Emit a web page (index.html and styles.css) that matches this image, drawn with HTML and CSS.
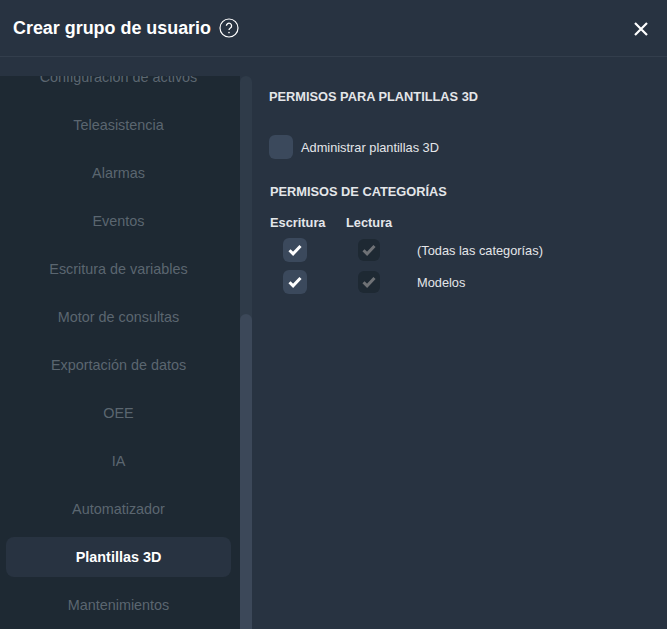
FILE: index.html
```html
<!DOCTYPE html>
<html lang="es">
<head>
<meta charset="utf-8">
<title>Crear grupo de usuario</title>
<link rel="stylesheet" href="styles.css">
</head>
<body>
<div class="dialog">
  <header class="head">
    <h1 class="title">Crear grupo de usuario</h1>
    <svg class="help" viewBox="0 0 20 20" width="20" height="20" aria-hidden="true"><circle cx="10" cy="10" r="9" fill="none" stroke="#fff" stroke-width="1.2"/><path d="M7.4 7.8a2.6 2.6 0 1 1 4 2.2c-.9.6-1.4 1-1.4 2.1" fill="none" stroke="#fff" stroke-width="1.3"/><circle cx="10" cy="14.6" r=".8" fill="#fff"/></svg>
    <svg class="close" viewBox="0 0 14 14" width="14" height="14" aria-hidden="true"><path d="M1 1l12 12M13 1L1 13" stroke="#fff" stroke-width="2.2" fill="none"/></svg>
  </header>
  <div class="body">
    <aside class="side">
      <nav class="list">
        <a class="item">Configuración de activos</a>
        <a class="item">Teleasistencia</a>
        <a class="item">Alarmas</a>
        <a class="item">Eventos</a>
        <a class="item">Escritura de variables</a>
        <a class="item">Motor de consultas</a>
        <a class="item">Exportación de datos</a>
        <a class="item">OEE</a>
        <a class="item">IA</a>
        <a class="item">Automatizador</a>
        <a class="item active">Plantillas 3D</a>
        <a class="item">Mantenimientos</a>
      </nav>
    </aside>
    <div class="track"><div class="thumb"></div></div>
    <main class="main">
      <h2 class="h-perm">PERMISOS PARA PLANTILLAS 3D</h2>
      <label class="admin"><span class="box big"></span><span class="admin-label">Administrar plantillas 3D</span></label>
      <h2 class="h-cat">PERMISOS DE CATEGORÍAS</h2>
      <div class="grid">
        <span class="col-h">Escritura</span><span class="col-h">Lectura</span><span></span>
        <span class="cell"><span class="box on"><svg viewBox="0 0 14 12" width="14" height="12"><path d="M1.5 6.2l3.6 3.6L12.5 2" fill="none" stroke="#fff" stroke-width="3"/></svg></span></span>
        <span class="cell"><span class="box off"><svg viewBox="0 0 14 12" width="14" height="12"><path d="M1.5 6.2l3.6 3.6L12.5 2" fill="none" stroke="#6f7276" stroke-width="3"/></svg></span></span>
        <span class="row-label">(Todas las categorías)</span>
        <span class="cell"><span class="box on"><svg viewBox="0 0 14 12" width="14" height="12"><path d="M1.5 6.2l3.6 3.6L12.5 2" fill="none" stroke="#fff" stroke-width="3"/></svg></span></span>
        <span class="cell"><span class="box off"><svg viewBox="0 0 14 12" width="14" height="12"><path d="M1.5 6.2l3.6 3.6L12.5 2" fill="none" stroke="#6f7276" stroke-width="3"/></svg></span></span>
        <span class="row-label">Modelos</span>
      </div>
    </main>
  </div>
</div>
</body>
</html>
```
FILE: styles.css
```css
* { box-sizing: border-box; }
html, body { margin: 0; height: 100%; overflow: hidden; }
body { background: #283341; font-family: "Liberation Sans", Arial, sans-serif; color: #fff; }
.dialog { height: 629px; display: flex; flex-direction: column; }
.head { height: 57px; flex: none; display: flex; align-items: center; padding: 0 19px 1px 13px; border-bottom: 1px solid #333e4c; }
.title { margin: 0; font-size: 17.92px; font-weight: 700; line-height: 20px; }
.help { margin-left: 8px; }
.close { margin-left: auto; margin-top: 2px; }
.body { flex: 1; display: flex; margin-top: 19px; min-height: 0; }
.side { width: 240px; flex: none; background: #1e2933; overflow: hidden; }
.list { display: flex; flex-direction: column; gap: 8px; margin-top: -19px; padding: 0 9px 0 6px; }
.item { height: 40px; flex: none; display: flex; align-items: center; justify-content: center; font-size: 14.4px; color: #5b6670; border-radius: 8px; }
.item.active { background: #283341; color: #fff; font-weight: 700; }
.track { width: 12px; flex: none; background: #2f3b49; border-radius: 6px 6px 0 0; padding-top: 238px; }
.thumb { height: 100%; background: #3c4859; border-radius: 6px 6px 0 0; }
.main { flex: 1; padding: 12px 0 0 17px; }
.h-perm, .h-cat { margin: 0; font-size: 12.8px; font-weight: 700; line-height: 18px; color: #e4e6e9; }
.admin { display: flex; align-items: center; gap: 8px; margin-top: 29px; }
.admin-label { font-size: 12.8px; color: #e4e6e9; }
.box { display: flex; align-items: center; justify-content: center; border-radius: 6px; }
.big { width: 24px; height: 24px; background: #3b495c; }
.h-cat { margin: 24px 0 0 1px; }
.grid { display: grid; grid-template-columns: 76px 71px auto; grid-template-rows: 24px 32px 32px; margin: 9px 0 0 1px; justify-content: start; font-size: 12.8px; }
.col-h { font-weight: 700; color: #e4e6e9; line-height: 20px; padding-top: 3px; }
.cell { display: flex; align-items: center; padding-left: 13px; }
.cell + .cell { padding-left: 12px; }
.on { width: 24px; height: 24px; background: #3b495c; }
.off { width: 22px; height: 22px; background: #1e2933; }
.row-label { display: flex; align-items: center; color: #e4e6e9; }
```
